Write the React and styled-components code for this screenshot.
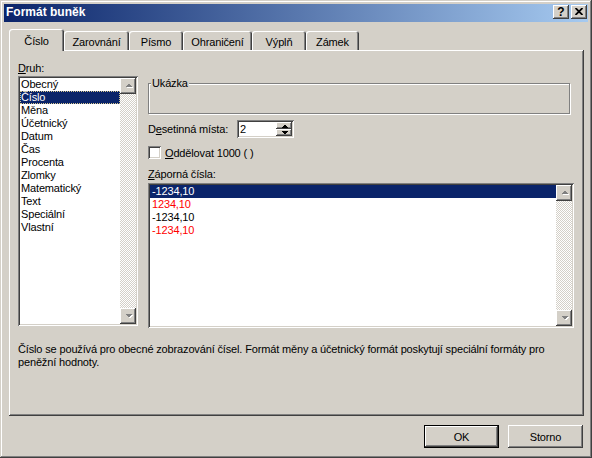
import styled, { createGlobalStyle } from "styled-components";

const GlobalStyle = createGlobalStyle`
  html, body { margin: 0; padding: 0; background: #d4d0c8; }
  body {
    font-family: "Liberation Sans", Arial, sans-serif;
    font-size: 11px;
    letter-spacing: -0.15px;
    color: #000;
  }
  *, *::before, *::after { box-sizing: border-box; }
`;

const raised = `
  background: #d4d0c8;
  box-shadow: inset -1px -1px #404040, inset 1px 1px #fff, inset -2px -2px #808080, inset 2px 2px #d4d0c8;
`;

const sunken = `
  background: #fff;
  padding: 2px;
  box-shadow: inset 1px 1px #808080, inset -1px -1px #fff, inset 2px 2px #404040, inset -2px -2px #d4d0c8;
`;

const Window = styled.div`
  width: 592px;
  height: 458px;
  padding: 4px;
  background: #d4d0c8;
  box-shadow: inset -1px -1px #404040, inset 1px 1px #d4d0c8, inset -2px -2px #808080, inset 2px 2px #fff;
  display: flex;
  flex-direction: column;
`;

const TitleBar = styled.div`
  height: 18px;
  flex-shrink: 0;
  display: flex;
  align-items: center;
  justify-content: space-between;
  padding: 0 1px 2px 2px;
  background: linear-gradient(to right, #0a246a, #a6caf0);
  color: #fff;
  font-weight: bold;
  font-size: 12px;
  letter-spacing: 0;
`;

const TitleButtons = styled.div`
  display: flex;
  gap: 2px;
`;

const TitleButton = styled.div`
  ${raised}
  width: 16px;
  height: 14px;
  display: flex;
  align-items: center;
  justify-content: center;
  color: #000;
  font-size: 12px;
  font-weight: bold;
  line-height: 14px;
  padding-bottom: 1px;
`;

const Body = styled.div`
  flex: 1;
  display: flex;
  flex-direction: column;
  padding: 7px 4px 0 5px;
`;

const TabRow = styled.div`
  display: flex;
  align-items: flex-end;
  height: 22px;
  margin-bottom: -1px;
`;

const Tab = styled.div`
  position: relative;
  z-index: ${(p) => (p.$active ? 1 : 0)};
  width: ${(p) => p.$w}px;
  height: ${(p) => (p.$active ? 22 : 19)}px;
  margin-bottom: ${(p) => (p.$active ? 0 : 1)}px;
  padding-top: ${(p) => (p.$active ? 1 : 2)}px;
  display: flex;
  align-items: center;
  justify-content: center;
  background: #d4d0c8;
  border-radius: 3px 3px 0 0;
  box-shadow: inset 1px 1px #fff, inset -1px 0 #404040, inset -2px 0 #808080;
`;

const Panel = styled.div`
  height: 366px;
  padding: 12px 10px 0 9px;
  background: #d4d0c8;
  box-shadow: inset -1px -1px #404040, inset 1px 1px #fff, inset -2px -2px #808080, inset 2px 2px #d4d0c8;
`;

const Columns = styled.div`
  display: flex;
  gap: 10px;
`;

const LeftCol = styled.div`
  width: 120px;
  display: flex;
  flex-direction: column;
`;

const RightCol = styled.div`
  width: 426px;
  display: flex;
  flex-direction: column;
`;

const Label = styled.div`
  line-height: 13px;
  height: 13px;
  white-space: nowrap;
`;

const ListBox = styled.div`
  ${sunken}
  width: ${(p) => p.$w}px;
  height: ${(p) => p.$h}px;
  display: flex;
`;

const Items = styled.div`
  flex: 1;
  display: flex;
  flex-direction: column;
`;

const Item = styled.div`
  height: 13px;
  line-height: 13px;
  padding-left: ${(p) => p.$pad || 1}px;
  white-space: nowrap;
  color: ${(p) => (p.$sel ? "#fff" : p.$red ? "#ff0000" : "#000")};
  background: ${(p) => (p.$sel ? "#0a246a" : "transparent")};
  outline: ${(p) => (p.$focus ? "1px dotted #d8c890" : "none")};
  outline-offset: -1px;
`;

const ScrollBar = styled.div`
  width: 16px;
  display: flex;
  flex-direction: column;
`;

const ScrollTrack = styled.div`
  flex: 1;
  background-color: #fff;
  background-image: repeating-conic-gradient(#d4d0c8 0 25%, #fff 0 50%);
  background-size: 2px 2px;
`;

const ScrollButton = styled.div`
  ${raised}
  width: 16px;
  height: 16px;
  display: flex;
  align-items: center;
  justify-content: center;
`;

const GroupBox = styled.fieldset`
  margin: 15px 0 0 0;
  padding: 0;
  width: 422px;
  height: 37px;
  min-width: 0;
  border: 1px solid #808080;
  box-shadow: 1px 1px 0 #fff, inset 1px 1px 0 #fff;
`;

const Legend = styled.legend`
  margin-left: 2px;
  padding: 0 1px;
  line-height: 13px;
  background: #d4d0c8;
`;

const FieldRow = styled.div`
  display: flex;
  align-items: center;
  margin-top: ${(p) => p.$mt}px;
  gap: ${(p) => p.$gap || 0}px;
`;

const FieldLabel = styled.div`
  width: 89px;
  white-space: nowrap;
`;

const SpinBox = styled.div`
  ${sunken}
  width: 57px;
  height: 18px;
  display: flex;
`;

const SpinValue = styled.div`
  flex: 1;
  line-height: 14px;
  padding-left: 1px;
`;

const SpinButtons = styled.div`
  width: 16px;
  display: flex;
  flex-direction: column;
`;

const SpinButton = styled.div`
  ${raised}
  height: 7px;
  display: flex;
  align-items: center;
  justify-content: center;
`;

const CheckBox = styled.div`
  ${sunken}
  width: 13px;
  height: 13px;
`;

const NegLabel = styled(Label)`
  margin-top: 9px;
  margin-bottom: 2px;
`;

const Description = styled.div`
  margin-top: 15px;
  line-height: 13px;
`;

const ButtonRow = styled.div`
  display: flex;
  justify-content: flex-end;
  gap: 9px;
  margin-top: 9px;
  padding-right: 1px;
`;

const Button = styled.div`
  ${raised}
  width: 75px;
  height: 23px;
  display: flex;
  align-items: center;
  justify-content: center;
  border: ${(p) => (p.$default ? "1px solid #000" : "none")};
`;

const DisabledArrow = ({ down }) => (
  <svg width="9" height="6" viewBox="0 0 9 6" shapeRendering="crispEdges">
    {down ? (
      <>
        <polygon points="2,2 9,2 5.5,5.5" fill="#fff" />
        <polygon points="1,1 8,1 4.5,4.5" fill="#808080" />
      </>
    ) : (
      <>
        <polygon points="5.5,1.5 9,5 2,5" fill="#fff" />
        <polygon points="4.5,0.5 8,4 1,4" fill="#808080" />
      </>
    )}
  </svg>
);

const SpinArrow = ({ down }) => (
  <svg width="7" height="4" viewBox="0 0 7 4" shapeRendering="crispEdges">
    <polygon points={down ? "0,0 7,0 3.5,3.5" : "3.5,0.5 7,4 0,4"} fill="#000" />
  </svg>
);

const Scroll = () => (
  <ScrollBar>
    <ScrollButton>
      <DisabledArrow />
    </ScrollButton>
    <ScrollTrack />
    <ScrollButton>
      <DisabledArrow down />
    </ScrollButton>
  </ScrollBar>
);

const tabs = [
  { label: "Číslo", w: 55 },
  { label: "Zarovnání", w: 65 },
  { label: "Písmo", w: 54 },
  { label: "Ohraničení", w: 69 },
  { label: "Výplň", w: 54 },
  { label: "Zámek", w: 53 },
];

const kinds = [
  "Obecný", "Číslo", "Měna", "Účetnický", "Datum", "Čas",
  "Procenta", "Zlomky", "Matematický", "Text", "Speciální", "Vlastní",
];

const negatives = [
  { text: "-1234,10", sel: true },
  { text: "1234,10", red: true },
  { text: "-1234,10" },
  { text: "-1234,10", red: true },
];

export default function App() {
  return (
    <>
      <GlobalStyle />
      <Window>
        <TitleBar>
          <span>Formát buněk</span>
          <TitleButtons>
            <TitleButton>?</TitleButton>
            <TitleButton>
              <svg width="8" height="7" viewBox="0 0 8 7">
                <path d="M0.5 0 L7.5 7 M7.5 0 L0.5 7" stroke="#000" strokeWidth="1.8" />
              </svg>
            </TitleButton>
          </TitleButtons>
        </TitleBar>
        <Body>
          <TabRow>
            {tabs.map((t, i) => (
              <Tab key={t.label} $w={t.w} $active={i === 0}>
                {t.label}
              </Tab>
            ))}
          </TabRow>
          <Panel>
            <Columns>
              <LeftCol>
                <Label style={{ marginBottom: 1 }}>
                  <u>D</u>ruh:
                </Label>
                <ListBox $w={120} $h={250}>
                  <Items>
                    {kinds.map((k, i) => (
                      <Item key={k} $sel={i === 1} $focus={i === 1}>
                        {k}
                      </Item>
                    ))}
                  </Items>
                  <Scroll />
                </ListBox>
              </LeftCol>
              <RightCol>
                <GroupBox>
                  <Legend>Ukázka</Legend>
                </GroupBox>
                <FieldRow $mt={6}>
                  <FieldLabel>
                    D<u>e</u>setinná místa:
                  </FieldLabel>
                  <SpinBox>
                    <SpinValue>2</SpinValue>
                    <SpinButtons>
                      <SpinButton>
                        <SpinArrow />
                      </SpinButton>
                      <SpinButton>
                        <SpinArrow down />
                      </SpinButton>
                    </SpinButtons>
                  </SpinBox>
                </FieldRow>
                <FieldRow $mt={8} $gap={4}>
                  <CheckBox />
                  <span>
                    <u>O</u>ddělovat 1000 ( )
                  </span>
                </FieldRow>
                <NegLabel>
                  <u>Z</u>áporná čísla:
                </NegLabel>
                <ListBox $w={426} $h={145}>
                  <Items>
                    {negatives.map((n, i) => (
                      <Item key={i} $pad={2} $sel={n.sel} $red={n.red}>
                        {n.text}
                      </Item>
                    ))}
                  </Items>
                  <Scroll />
                </ListBox>
              </RightCol>
            </Columns>
            <Description>
              Číslo se používá pro obecné zobrazování čísel. Formát měny a účetnický formát poskytují speciální formáty pro
              <br />
              peněžní hodnoty.
            </Description>
          </Panel>
          <ButtonRow>
            <Button $default>OK</Button>
            <Button>Storno</Button>
          </ButtonRow>
        </Body>
      </Window>
    </>
  );
}
